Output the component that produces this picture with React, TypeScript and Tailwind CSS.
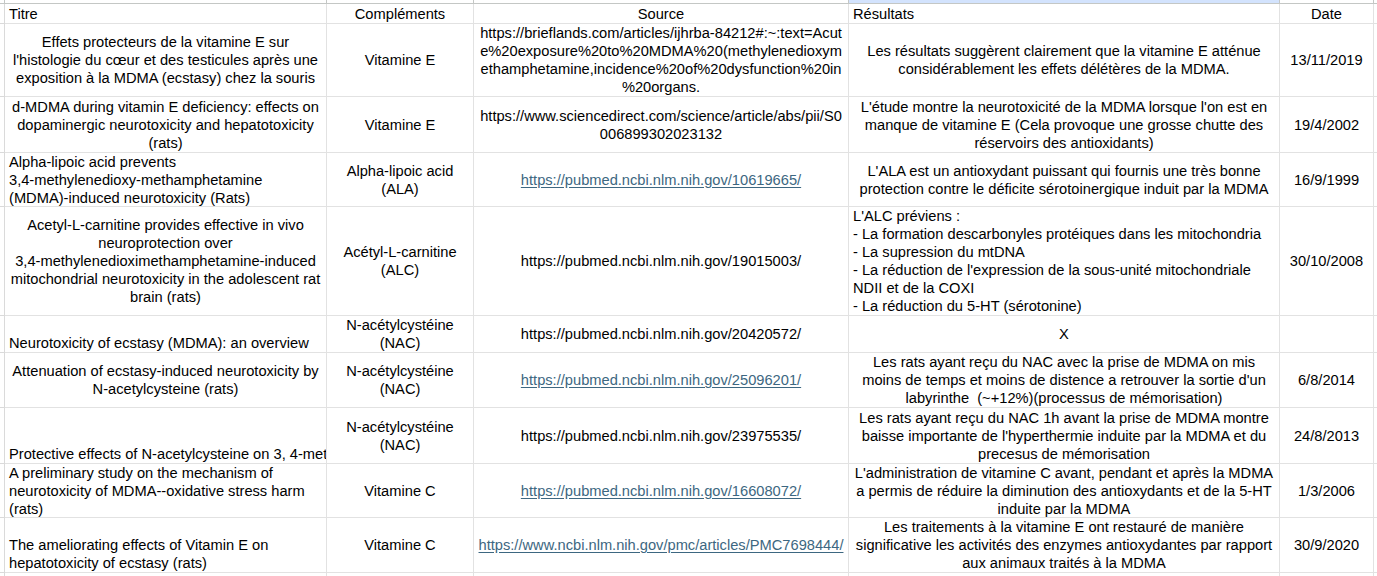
import React from "react"

type Cell = {
    lines: string[]
    align?: "left" | "center"
    valign?: "middle" | "bottom"
    link?: boolean
    clip?: boolean
}

type Row = {
    height: string
    cells: Cell[]
}

const c = (lines: string[] | string, extra: Partial<Cell> = {}): Cell => ({
    lines: Array.isArray(lines) ? lines : [lines],
    align: "center",
    valign: "middle",
    ...extra,
})

const widths = ["w-[322px]", "w-[147px]", "w-[375px]", "w-[431px]", "w-[94px]"]

const header: Cell[] = [
    c("Titre", { align: "left" }),
    c("Compléments"),
    c("Source"),
    c("Résultats", { align: "left" }),
    c("Date"),
]

const rows: Row[] = [
    {
        height: "h-[73px]",
        cells: [
            c([
                "Effets protecteurs de la vitamine E sur",
                "l'histologie du cœur et des testicules après une",
                "exposition à la MDMA (ecstasy) chez la souris",
            ]),
            c("Vitamine E"),
            c([
                "https://brieflands.com/articles/ijhrba-84212#:~:text=Acut",
                "e%20exposure%20to%20MDMA%20(methylenedioxym",
                "ethamphetamine,incidence%20of%20dysfunction%20in",
                "%20organs.",
            ]),
            c([
                "Les résultats suggèrent clairement que la vitamine E atténue",
                "considérablement les effets délétères de la MDMA.",
            ]),
            c("13/11/2019"),
        ],
    },
    {
        height: "h-[56px]",
        cells: [
            c([
                "d-MDMA during vitamin E deficiency: effects on",
                "dopaminergic neurotoxicity and hepatotoxicity",
                "(rats)",
            ]),
            c("Vitamine E"),
            c(["https://www.sciencedirect.com/science/article/abs/pii/S0", "006899302023132"]),
            c([
                "L'étude montre la neurotoxicité de la MDMA lorsque l'on est en",
                "manque de vitamine E (Cela provoque une grosse chutte des",
                "réservoirs des antioxidants)",
            ]),
            c("19/4/2002"),
        ],
    },
    {
        height: "h-[54px]",
        cells: [
            c(
                [
                    "Alpha-lipoic acid prevents",
                    "3,4-methylenedioxy-methamphetamine",
                    "(MDMA)-induced neurotoxicity (Rats)",
                ],
                { align: "left" }
            ),
            c(["Alpha-lipoic acid", "(ALA)"]),
            c("https://pubmed.ncbi.nlm.nih.gov/10619665/", { link: true }),
            c([
                "L'ALA est un antioxydant puissant qui fournis une très bonne",
                "protection contre le déficite sérotoinergique induit par la MDMA",
            ]),
            c("16/9/1999"),
        ],
    },
    {
        height: "h-[109px]",
        cells: [
            c([
                "Acetyl-L-carnitine provides effective in vivo",
                "neuroprotection over",
                "3,4-methylenedioximethamphetamine-induced",
                "mitochondrial neurotoxicity in the adolescent rat",
                "brain (rats)",
            ]),
            c(["Acétyl-L-carnitine", "(ALC)"]),
            c("https://pubmed.ncbi.nlm.nih.gov/19015003/"),
            c(
                [
                    "L'ALC préviens :",
                    "- La formation descarbonyles protéiques dans les mitochondria",
                    "- La supression du mtDNA",
                    "- La réduction de l'expression de la sous-unité mitochondriale",
                    "NDII et de la COXI",
                    "- La réduction du 5-HT (sérotonine)",
                ],
                { align: "left" }
            ),
            c("30/10/2008"),
        ],
    },
    {
        height: "h-[37px]",
        cells: [
            c("Neurotoxicity of ecstasy (MDMA): an overview", { align: "left", valign: "bottom" }),
            c(["N-acétylcystéine", "(NAC)"]),
            c("https://pubmed.ncbi.nlm.nih.gov/20420572/"),
            c("X"),
            c(""),
        ],
    },
    {
        height: "h-[55px]",
        cells: [
            c(["Attenuation of ecstasy-induced neurotoxicity by", "N-acetylcysteine (rats)"]),
            c(["N-acétylcystéine", "(NAC)"]),
            c("https://pubmed.ncbi.nlm.nih.gov/25096201/", { link: true }),
            c([
                "Les rats ayant reçu du NAC avec la prise de MDMA on mis",
                "moins de temps et moins de distence a retrouver la sortie d'un",
                "labyrinthe  (~+12%)(processus de mémorisation)",
            ]),
            c("6/8/2014"),
        ],
    },
    {
        height: "h-[56px]",
        cells: [
            c("Protective effects of N-acetylcysteine on 3, 4-met", {
                align: "left",
                valign: "bottom",
                clip: true,
            }),
            c(["N-acétylcystéine", "(NAC)"]),
            c("https://pubmed.ncbi.nlm.nih.gov/23975535/"),
            c([
                "Les rats ayant reçu du NAC 1h avant la prise de MDMA montre",
                "baisse importante de l'hyperthermie induite par la MDMA et du",
                "precesus de mémorisation",
            ]),
            c("24/8/2013"),
        ],
    },
    {
        height: "h-[54px]",
        cells: [
            c(
                [
                    "A preliminary study on the mechanism of",
                    "neurotoxicity of MDMA--oxidative stress harm",
                    "(rats)",
                ],
                { align: "left" }
            ),
            c("Vitamine C"),
            c("https://pubmed.ncbi.nlm.nih.gov/16608072/", { link: true }),
            c([
                "L'administration de vitamine C avant, pendant et après la MDMA",
                "a permis de réduire la diminution des antioxydants et de la 5-HT",
                "induite par la MDMA",
            ]),
            c("1/3/2006"),
        ],
    },
    {
        height: "h-[55px]",
        cells: [
            c(["The ameliorating effects of Vitamin E on", "hepatotoxicity of ecstasy (rats)"], {
                align: "left",
                valign: "bottom",
            }),
            c("Vitamine C"),
            c("https://www.ncbi.nlm.nih.gov/pmc/articles/PMC7698444/", { link: true }),
            c([
                "Les traitements à la vitamine E ont restauré de manière",
                "significative les activités des enzymes antioxydantes par rapport",
                "aux animaux traités à la MDMA",
            ]),
            c("30/9/2020"),
        ],
    },
]

function SheetCell({ cell, width }: { cell: Cell; width: string }) {
    return (
        <div
            className={`${width} shrink-0 h-full flex flex-col overflow-hidden border-r border-b border-[#e2e2e2] ${
                cell.clip ? "pl-[4px]" : "px-[4px]"
            } ${cell.valign === "bottom" ? "justify-end" : "justify-center"} ${
                cell.align === "left" ? "text-left" : "text-center"
            }`}
        >
            {cell.lines.map((line, i) => (
                <div
                    key={i}
                    className={`whitespace-pre ${
                        cell.link ? "text-[#3d6781] underline decoration-[#3d6781] underline-offset-2" : ""
                    }`}
                >
                    {line}
                </div>
            ))}
        </div>
    )
}

function SheetRow({ height, cells }: { height: string; cells: Cell[] }) {
    return (
        <div className={`flex ${height}`}>
            <div className="w-[5px] shrink-0 h-full border-r border-b border-[#dadada]" />
            {cells.map((cell, i) => (
                <SheetCell key={i} cell={cell} width={widths[i]} />
            ))}
            <div className="w-[3px] shrink-0 h-full border-b border-[#e2e2e2]" />
        </div>
    )
}

export default function App() {
    return (
        <div className="w-[1377px] h-[576px] overflow-hidden bg-white text-black text-[14.67px] leading-[18px] font-['Liberation_Sans',Arial,sans-serif]">
            {/* column header strip (cut off) */}
            <div className="flex h-[4px] border-b border-[#c4c7c5]">
                <div className="w-[5px] shrink-0 border-r border-[#c4c7c5]" />
                <div className="w-[322px] shrink-0 border-r border-[#c4c7c5]" />
                <div className="w-[147px] shrink-0 border-r border-[#c4c7c5]" />
                <div className="w-[375px] shrink-0 border-r border-[#c4c7c5]" />
                <div className="w-[431px] shrink-0 border-r border-[#c4c7c5] bg-[#d3e3fd]" />
                <div className="w-[94px] shrink-0 border-r border-[#c4c7c5]" />
                <div className="w-[3px] shrink-0" />
            </div>

            <SheetRow height="h-[20px]" cells={header} />
            {rows.map((row, i) => (
                <SheetRow key={i} height={row.height} cells={row.cells} />
            ))}
            <div className="flex h-[10px]">
                <div className="w-[5px] shrink-0 h-full border-r border-[#dadada]" />
                {widths.map((w) => (
                    <div key={w} className={`${w} shrink-0 h-full border-r border-[#e2e2e2]`} />
                ))}
            </div>
        </div>
    )
}
